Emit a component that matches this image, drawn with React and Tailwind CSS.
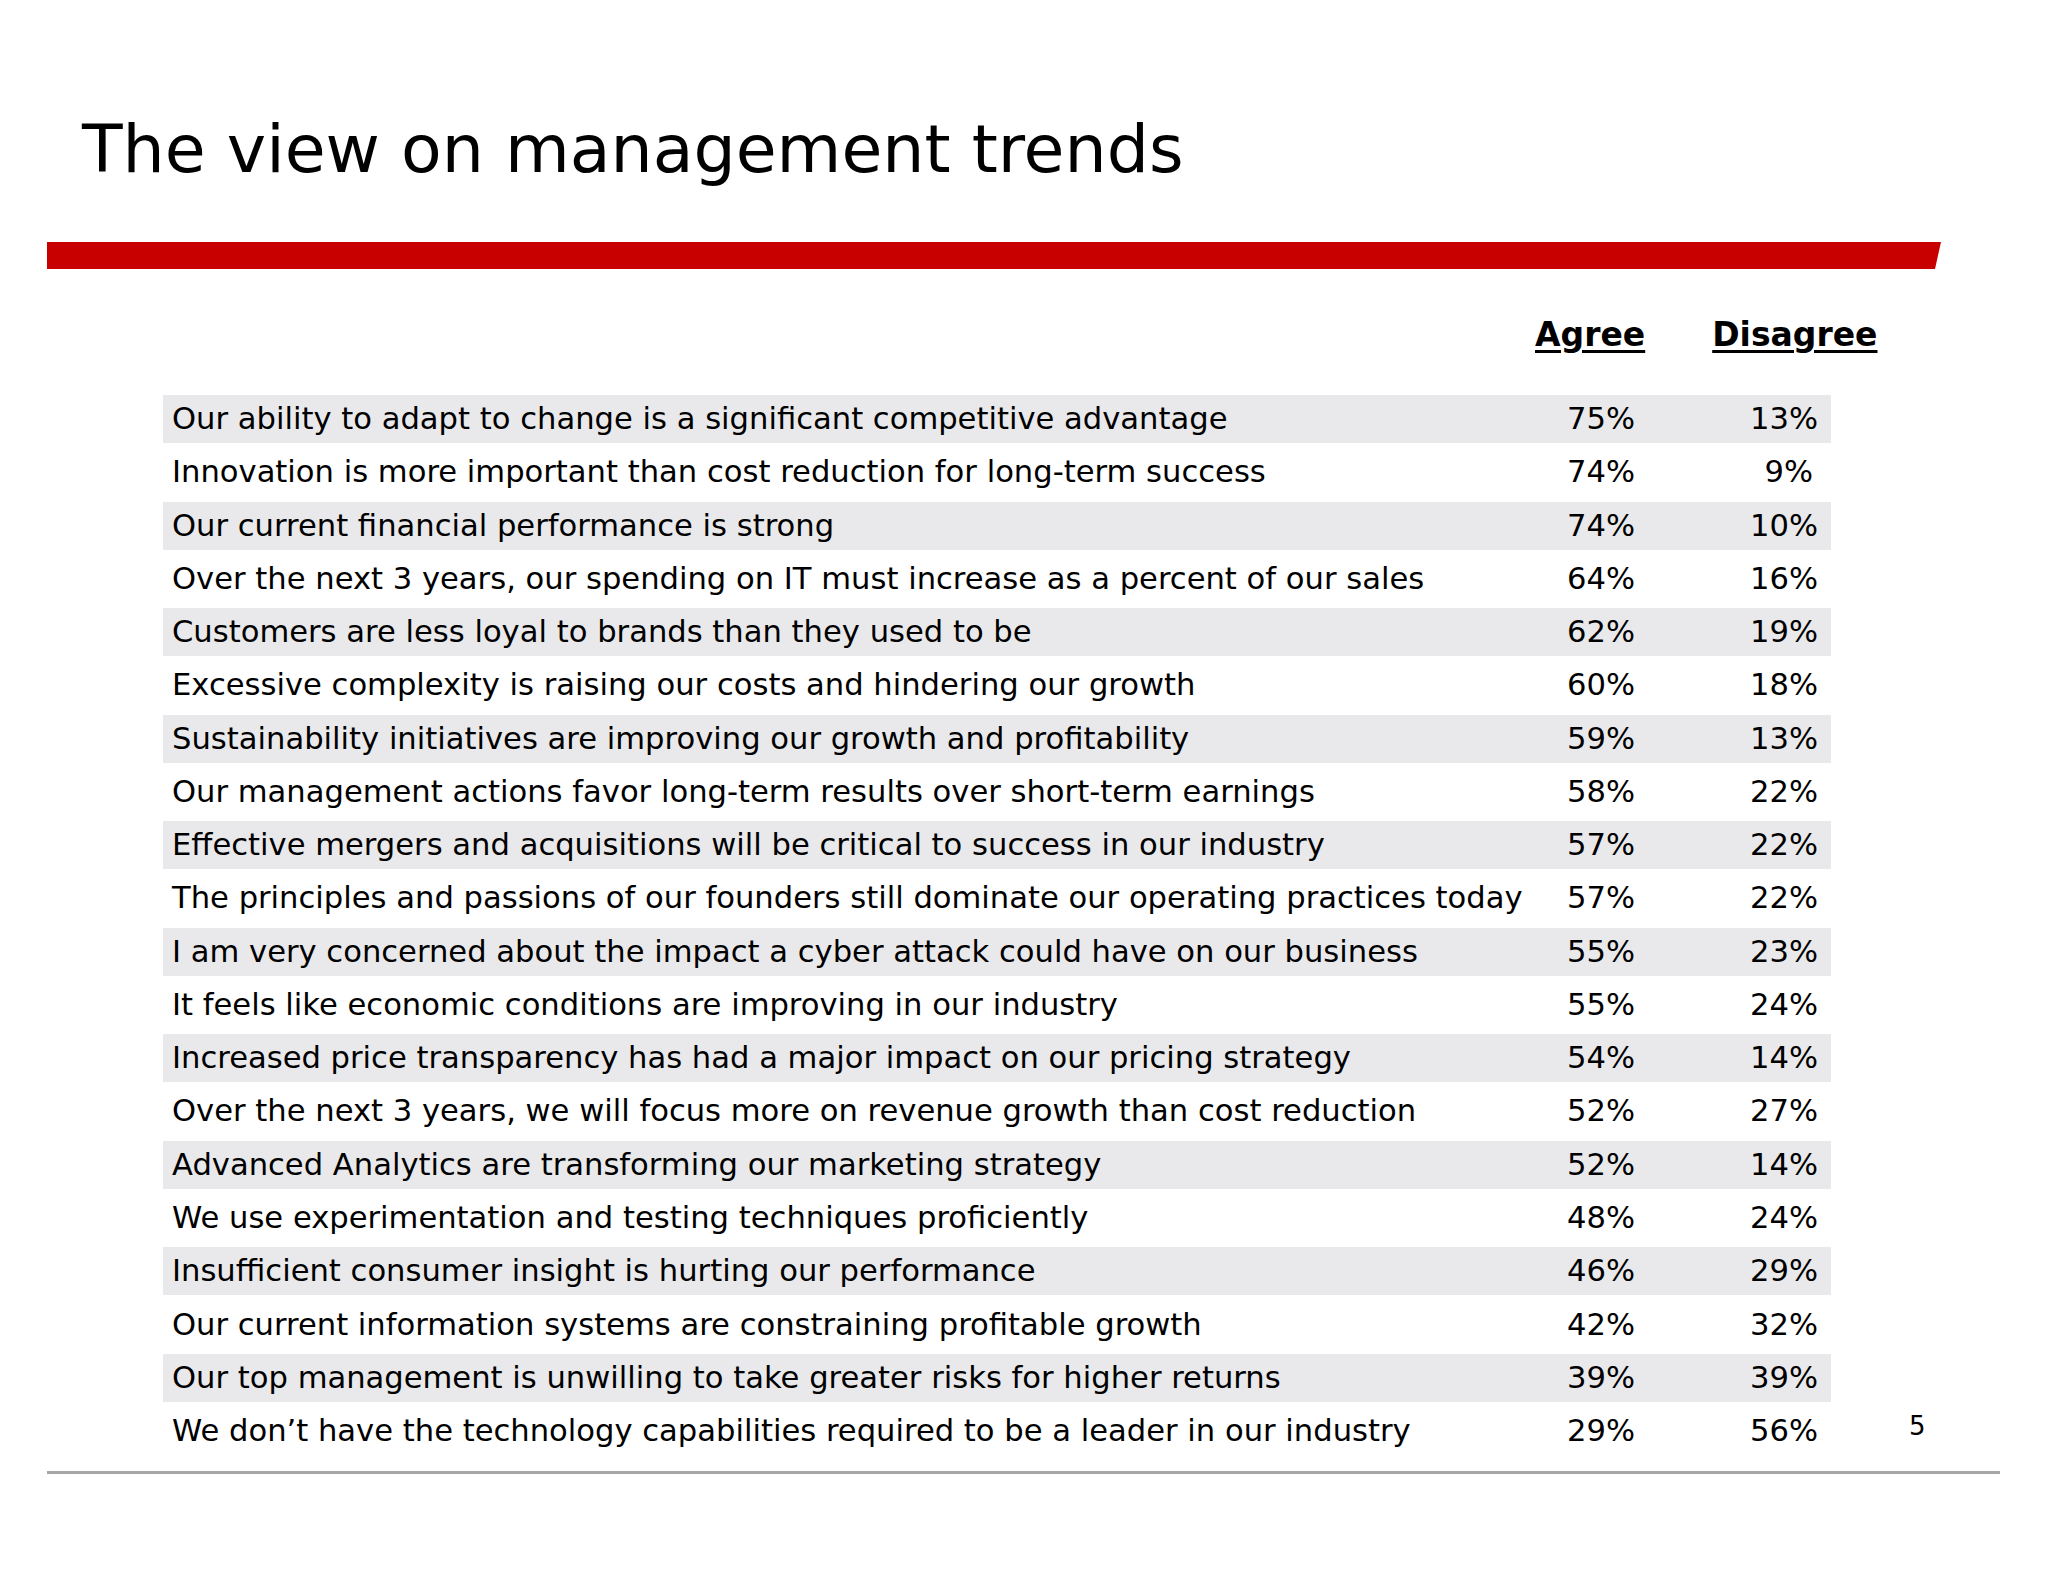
import React from "react";

const rows = [
  ["Our ability to adapt to change is a significant competitive advantage", "75%", "13%"],
  ["Innovation is more important than cost reduction for long-term success", "74%", "9%"],
  ["Our current financial performance is strong", "74%", "10%"],
  ["Over the next 3 years, our spending on IT must increase as a percent of our sales", "64%", "16%"],
  ["Customers are less loyal to brands than they used to be", "62%", "19%"],
  ["Excessive complexity is raising our costs and hindering our growth", "60%", "18%"],
  ["Sustainability initiatives are improving our growth and profitability", "59%", "13%"],
  ["Our management actions favor long-term results over short-term earnings", "58%", "22%"],
  ["Effective mergers and acquisitions will be critical to success in our industry", "57%", "22%"],
  ["The principles and passions of our founders still dominate our operating practices today", "57%", "22%"],
  ["I am very concerned about the impact a cyber attack could have on our business", "55%", "23%"],
  ["It feels like economic conditions are improving in our industry", "55%", "24%"],
  ["Increased price transparency has had a major impact on our pricing strategy", "54%", "14%"],
  ["Over the next 3 years, we will focus more on revenue growth than cost reduction", "52%", "27%"],
  ["Advanced Analytics are transforming our marketing strategy", "52%", "14%"],
  ["We use experimentation and testing techniques proficiently", "48%", "24%"],
  ["Insufficient consumer insight is hurting our performance", "46%", "29%"],
  ["Our current information systems are constraining profitable growth", "42%", "32%"],
  ["Our top management is unwilling to take greater risks for higher returns", "39%", "39%"],
  ["We don\u2019t have the technology capabilities required to be a leader in our industry", "29%", "56%"],
];

export default function App() {
  return (
    <div
      className="w-[2048px] h-[1582px] bg-white text-black flex flex-col overflow-hidden"
      style={{ fontFamily: '"DejaVu Sans", Verdana, sans-serif' }}
    >
      <h1 className="mt-[109px] ml-[82px] text-[66.5px] leading-[80px] font-normal whitespace-nowrap">
        The view on management trends
      </h1>
      <div className="mt-[53px] ml-[47px] w-[1894px] h-[27px] bg-[#c80000] [clip-path:polygon(0_0,100%_0,calc(100%-6px)_100%,0_100%)]" />
      <div className="mt-[46px] flex text-[33px] leading-[40px] font-bold">
        <span className="ml-[1535px] underline decoration-[3px] underline-offset-[4px]">Agree</span>
        <span className="ml-[67px] underline decoration-[3px] underline-offset-[4px]">Disagree</span>
      </div>
      <div className="mt-[40px] flex items-end">
        <div className="ml-[163px] w-[1668px] flex flex-col gap-[5.28px] text-[30.6px] leading-[48px]">
          {rows.map(([label, agree, disagree], i) => (
            <div
              key={i}
              className={`h-[48px] flex whitespace-nowrap ${i % 2 === 0 ? "bg-[#e9e9eb]" : "bg-white"}`}
            >
              <div className="w-[1372px] pl-[9px]">{label}</div>
              <div className="w-[100px] text-right">{agree}</div>
              <div className={`w-[183px] text-right ${disagree === "9%" ? "pr-[5px]" : ""}`}>{disagree}</div>
            </div>
          ))}
        </div>
        <div className="ml-[78px] mb-[16px] text-[26px] leading-[26px]">5</div>
      </div>
      <div className="mt-[16px] ml-[47px] w-[1953px] h-[3px] bg-[#a6a6a6]" />
    </div>
  );
}
